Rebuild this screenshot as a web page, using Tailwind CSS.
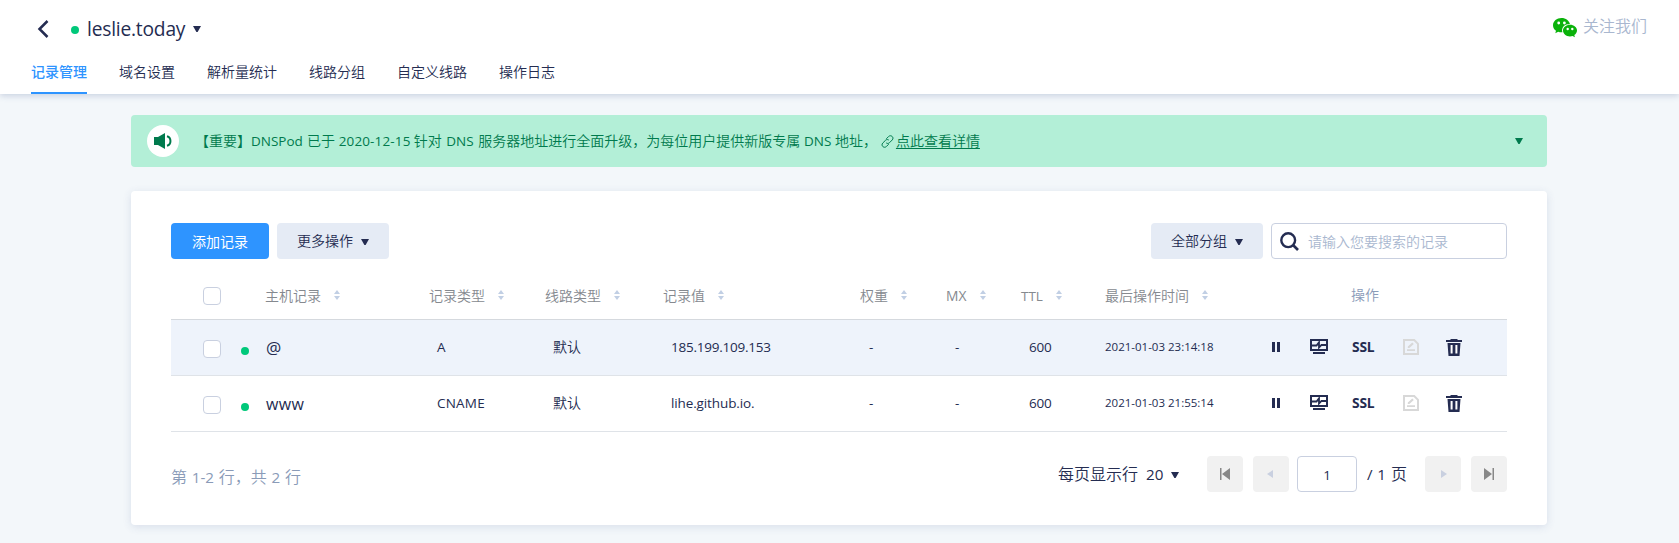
<!DOCTYPE html>
<html lang="zh-CN">
<head>
<meta charset="utf-8">
<title>leslie.today - 记录管理</title>
<script src="https://cdn.jsdelivr.net/npm/@tailwindcss/browser@4"></script>
</head>
<body class="h-[543px] overflow-hidden bg-[#f3f7fa] font-['Open_Sans','Noto_Sans_CJK_SC',sans-serif] text-sm font-[350] leading-5 text-[#242c51]">
<svg class="hidden">
  <symbol id="caret" viewBox="0 0 8 6"><path d="M0 0h8L4.600 6H3.400z" fill="currentColor"/></symbol>
  <symbol id="sort" viewBox="0 0 6 10"><path d="M3 0l3 4H0zM3 10L0 6h6z" fill="#c1cfe4"/></symbol>
  <symbol id="pause" viewBox="0 0 8 10"><path d="M0 0h3v10H0zM5 0h3v10H5z" fill="currentColor"/></symbol>
  <symbol id="monitor" viewBox="0 0 18 15"><path d="M1 1h16v10H1z" fill="none" stroke="currentColor" stroke-width="2"/><path d="M3 13h12v2H3z" fill="currentColor"/><path d="M2 6.500h4.500L9 3.400v5.200L11.500 6H16" fill="none" stroke="currentColor" stroke-width="1.800"/></symbol>
  <symbol id="edit" viewBox="0 0 16 16"><path d="M1 1h10.200L15 4.800V15H1z" fill="none" stroke="currentColor" stroke-width="2"/><path d="M4 10.200h8v1.800H4zM4.800 9V7.400L9.300 3.600l1.500 1.500L6.400 9z" fill="currentColor"/></symbol>
  <symbol id="trash" viewBox="0 0 16 17"><path d="M4.500 0h7v1H16v2H0V1h4.500zM1.500 4h13l-1 13h-11z" fill="currentColor"/><path d="M5.600 6v8.500M10.400 6v8.500" stroke="#fff" stroke-width="2" fill="none"/></symbol>
</svg>

<header class="relative flex h-[94px] flex-col bg-white shadow-[0_2px_6px_rgba(60,80,140,0.22)]">
  <div class="flex h-[57px] items-center pl-[37px] pr-8">
    <svg class="mr-[22px] h-[18px] w-[12px]" viewBox="0 0 12 18"><path d="M10.500 1L2.500 9l8 8" fill="none" stroke="#242c51" stroke-width="2.500"/></svg>
    <span class="mt-[3px] size-2 rounded-full bg-[#00c87a]"></span>
    <h1 class="ml-2 w-[106px] whitespace-nowrap text-[19.200px] font-normal leading-7 tracking-[-0.200px]">leslie.today</h1>
    <svg class="mt-px h-1.5 w-2"><use href="#caret"/></svg>
    <a class="mb-[5px] ml-auto flex items-center text-base text-[#a9b7cf]">
      <svg class="mr-1.5 mt-1 h-[20px] w-6" viewBox="0 0 24 20"><path d="M8.500 0C3.800 0 0 3.200 0 7.200c0 2.300 1.200 4.200 3 5.500L2.300 15.200l2.900-1.500c1 .4 2.100.6 3.300.6h.9C8 9.500 12 6 16.900 6.100 16.300 2.600 12.800 0 8.500 0z" fill="#0ab20a"/><path d="M24 12.600C24 9.300 20.800 6.800 17 6.800s-7 2.500-7 5.800 3.200 5.900 7 5.900c.9 0 1.800-.2 2.600-.5l2.300 1.300-.6-2.200c1.600-1 2.700-2.600 2.700-4.500z" fill="#0ab20a"/><g fill="#fff"><circle cx="5.700" cy="5" r="1.400"/><circle cx="11.400" cy="5" r="1.400"/><circle cx="14.700" cy="11" r="1.200"/><circle cx="19.300" cy="11" r="1.200"/></g></svg>
      关注我们
    </a>
  </div>
  <nav class="flex h-[37px] gap-8 pl-[31px] leading-[30px]">
    <a class="border-b-2 border-[#2e94ff] font-medium text-[#2e94ff]">记录管理</a>
    <a>域名设置</a>
    <a>解析量统计</a>
    <a>线路分组</a>
    <a>自定义线路</a>
    <a>操作日志</a>
  </nav>
</header>

<main class="mt-[21px] ml-[131px] w-[1416px]">
  <section class="flex h-[52px] items-center rounded bg-[#b3efd7] pl-4 pr-6 text-[#007a4d]">
    <span class="flex size-8 items-center justify-center rounded-full bg-white">
      <svg class="h-4 w-[18px]" viewBox="0 0 18 16"><path d="M0 4h4l7-4v16l-7-4H0z" fill="#007a4d"/><path d="M13 3.200c4.600 1.200 4.600 8.400 0 9.600" fill="none" stroke="#007a4d" stroke-width="2"/></svg>
    </span>
    <p class="ml-4 flex items-center whitespace-pre">【重要】<span class="w-[56px] text-[13.500px] font-normal">DNSPod</span>已于 <span class="w-[75px] text-[13.500px] font-normal tracking-[0.150px]">2020-12-15</span>针对 <span class="ml-px w-[32px] text-[13.500px] font-normal">DNS</span>服务器地址进行全面升级，为每位用户提供新版专属 <span class="w-[31px] text-[13.500px] font-normal">DNS</span>地址，<svg class="ml-1 mr-0.5 h-[13px] w-[13px]" viewBox="0 0 13 13"><g fill="none" stroke="#007a4d" stroke-width="1"><path d="M5.300 3.800L7.600 1.500c2.200-2.200 5.900.8 3.700 3.400L8.500 7.700C7.500 8.700 6 8.600 5.200 7.900"/><path d="M7.700 9.200l-2.300 2.300c-2.200 2.200-5.900-.8-3.700-3.400l2.800-2.800C5.500 4.300 7 4.400 7.800 5.100"/></g></svg><a class="underline underline-offset-2">点此查看详情</a></p>
    <svg class="ml-auto h-1.5 w-2"><use href="#caret"/></svg>
  </section>

  <section class="mt-6 h-[334px] rounded bg-white px-10 pt-8 shadow-[0_2px_8px_rgba(60,80,140,0.14)]">
    <div class="flex h-9 gap-2">
      <button class="w-[98px] rounded bg-[#2e94ff] pt-0.5 font-normal text-white">添加记录</button>
      <button class="flex w-[112px] items-center gap-2 rounded bg-[#e5ebf5] pl-5">更多操作<svg class="mt-0.5 h-1.5 w-2"><use href="#caret"/></svg></button>
      <button class="ml-auto flex w-[112px] items-center gap-2 rounded bg-[#e5ebf5] pl-5">全部分组<svg class="mt-0.5 h-1.5 w-2"><use href="#caret"/></svg></button>
      <label class="flex w-[236px] items-center rounded border border-[#c9d0e0] pl-2 text-[#a9b7cf]">
        <svg class="mr-[9px] size-[19px]" viewBox="0 0 19 19"><circle cx="8.200" cy="8.200" r="6.900" fill="none" stroke="#242c51" stroke-width="2.400"/><path d="M13 13l5 5" stroke="#242c51" stroke-width="2.600"/></svg>
        <span class="pt-0.5">请输入您要搜索的记录</span>
      </label>
    </div>

    <div class="mt-[14px]">
      <div class="grid h-[47px] grid-cols-[94px_164px_116px_118px_197px_86px_75px_84px_165px_237px] items-center border-b border-[#d5d9de] text-[#85898f]">
        <span class="ml-8 size-[18px] rounded border border-[#c9d0e0] bg-white"></span>
        <span class="flex items-center gap-[13px]">主机记录<svg class="mb-0.5 h-2.5 w-1.5"><use href="#sort"/></svg></span>
        <span class="flex items-center gap-[13px]">记录类型<svg class="mb-0.5 h-2.5 w-1.5"><use href="#sort"/></svg></span>
        <span class="flex items-center gap-[13px]">线路类型<svg class="mb-0.5 h-2.5 w-1.5"><use href="#sort"/></svg></span>
        <span class="flex items-center gap-[13px]">记录值<svg class="mb-0.5 h-2.5 w-1.5"><use href="#sort"/></svg></span>
        <span class="flex items-center gap-[13px]">权重<svg class="mb-0.5 h-2.5 w-1.5"><use href="#sort"/></svg></span>
        <span class="flex items-center font-normal"><span class="w-[34px] text-[13.800px]">MX</span><svg class="mb-0.5 h-2.5 w-1.5"><use href="#sort"/></svg></span>
        <span class="flex items-center font-normal"><span class="w-[35px] text-[13.500px]">TTL</span><svg class="mb-0.5 h-2.5 w-1.5"><use href="#sort"/></svg></span>
        <span class="flex items-center gap-[13px]">最后操作时间<svg class="mb-0.5 h-2.5 w-1.5"><use href="#sort"/></svg></span>
        <span class="pb-0.5 pl-[81px] text-[#8a9bb8]">操作</span>
      </div>

      <div class="grid h-14 grid-cols-[94px_164px_116px_118px_197px_86px_75px_84px_165px_237px] items-center border-b border-[#dfe3e8] bg-[#eef3fb] text-[13.500px] font-normal">
        <span class="flex items-center pl-8"><i class="mt-[3px] size-[18px] rounded border border-[#c9d0e0] bg-white"></i><i class="ml-5 mt-[7px] size-2 rounded-full bg-[#00c87a]"></i></span>
        <span class="pl-px text-[17px]">@</span>
        <span class="pb-0.5 pl-2">A</span>
        <span class="pb-0.5 pl-2 text-sm font-[350]">默认</span>
        <span class="pb-0.5 pl-2 tracking-[-0.240px]">185.199.109.153</span>
        <span class="pb-0.5 pl-[9px]">-</span>
        <span class="pb-0.5 pl-[9px]">-</span>
        <span class="pb-0.5 pl-2 tracking-[-0.200px]">600</span>
        <span class="pb-0.5 text-[11.500px]">2021-01-03 23:14:18</span>
        <span class="flex items-center pb-0.5 pl-0.5">
          <svg class="h-2.5 w-2"><use href="#pause"/></svg>
          <svg class="ml-[30px] h-[15px] w-[18px]"><use href="#monitor"/></svg>
          <b class="ml-6 w-[51px] text-[13.800px] tracking-[-0.200px]">SSL</b>
          <svg class="size-4 text-[#d8d8d8]"><use href="#edit"/></svg>
          <svg class="ml-[27px] mt-px h-[17px] w-4"><use href="#trash"/></svg>
        </span>
      </div>

      <div class="grid h-14 grid-cols-[94px_164px_116px_118px_197px_86px_75px_84px_165px_237px] items-center border-b border-[#dfe3e8] text-[13.500px] font-normal">
        <span class="flex items-center pl-8"><i class="mt-[3px] size-[18px] rounded border border-[#c9d0e0] bg-white"></i><i class="ml-5 mt-[7px] size-2 rounded-full bg-[#00c87a]"></i></span>
        <span class="pl-px text-base tracking-[0.300px]">www</span>
        <span class="pb-0.5 pl-2 tracking-[0.200px]">CNAME</span>
        <span class="pb-0.5 pl-2 text-sm font-[350]">默认</span>
        <span class="pb-0.5 pl-2 tracking-[-0.120px]">lihe.github.io.</span>
        <span class="pb-0.5 pl-[9px]">-</span>
        <span class="pb-0.5 pl-[9px]">-</span>
        <span class="pb-0.5 pl-2 tracking-[-0.200px]">600</span>
        <span class="pb-0.5 text-[11.500px]">2021-01-03 21:55:14</span>
        <span class="flex items-center pb-0.5 pl-0.5">
          <svg class="h-2.5 w-2"><use href="#pause"/></svg>
          <svg class="ml-[30px] h-[15px] w-[18px]"><use href="#monitor"/></svg>
          <b class="ml-6 w-[51px] text-[13.800px] tracking-[-0.200px]">SSL</b>
          <svg class="size-4 text-[#d8d8d8]"><use href="#edit"/></svg>
          <svg class="ml-[27px] mt-px h-[17px] w-4"><use href="#trash"/></svg>
        </span>
      </div>
    </div>

    <footer class="mt-6 flex h-9 items-center text-base">
      <span class="mt-1.5 whitespace-pre text-[#8a9bb8] [word-spacing:0.600px]">第 <span class="text-[15.200px] font-normal">1-2</span> 行，共 <span class="text-[15.200px] font-normal">2</span> 行</span>
      <span class="ml-auto w-[88px]">每页显示行</span>
      <span class="w-[25px] text-[15.200px] font-normal">20</span>
      <svg class="mr-7 mt-0.5 h-1.5 w-2"><use href="#caret"/></svg>
      <span class="mr-2.5 flex size-9 items-center justify-center rounded bg-[#f1f1f1]"><svg class="mr-px h-3 w-2.5" viewBox="0 0 10 12"><path d="M0 0h1.500v12H0zM10 0v12L2 6z" fill="#888"/></svg></span>
      <span class="mr-2 flex size-9 items-center justify-center rounded bg-[#f1f1f1]"><svg class="mr-0.5 h-2 w-1.5" viewBox="0 0 6 8"><path d="M6 0v8L0 4z" fill="#c9d0e0"/></svg></span>
      <span class="flex h-9 w-[60px] items-center justify-center rounded border border-[#c9d0e0] pt-0.5 text-[13.500px] font-normal">1</span>
      <span class="w-[68px] whitespace-pre pl-2.5 [word-spacing:0.800px]"><span class="text-[15.200px] font-normal">/ 1</span> 页</span>
      <span class="mr-2.5 flex size-9 items-center justify-center rounded bg-[#f1f1f1]"><svg class="ml-0.5 h-2 w-1.5" viewBox="0 0 6 8"><path d="M0 0v8l6-4z" fill="#c9d0e0"/></svg></span>
      <span class="flex size-9 items-center justify-center rounded bg-[#f1f1f1]"><svg class="h-3 w-2.5" viewBox="0 0 10 12"><path d="M10 0H8.500v12H10zM0 0v12l8-6z" fill="#888"/></svg></span>
    </footer>
  </section>
</main>
</body>
</html>
